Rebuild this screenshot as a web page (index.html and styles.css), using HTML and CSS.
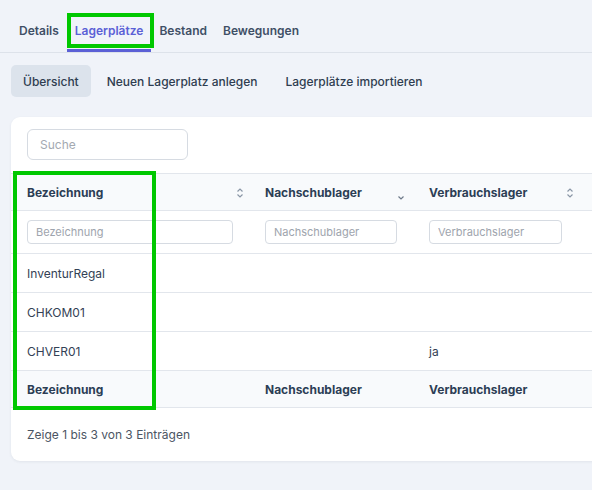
FILE: index.html
```html
<!DOCTYPE html>
<html lang="de">
<head>
<meta charset="utf-8">
<link rel="stylesheet" href="styles.css">
</head>
<body>
<div class="page">
  <nav class="tabs">
    <a class="tab">Details</a>
    <a class="tab active">Lagerplätze</a>
    <a class="tab">Bestand</a>
    <a class="tab">Bewegungen</a>
  </nav>
  <div class="subnav">
    <a class="subbtn current">Übersicht</a>
    <a class="subbtn">Neuen Lagerplatz anlegen</a>
    <a class="subbtn">Lagerplätze importieren</a>
  </div>
  <section class="card">
    <div class="search"><input class="search-input" placeholder="Suche"></div>
    <table class="grid">
      <colgroup><col class="c1"><col class="c2"><col class="c3"><col></colgroup>
      <thead>
        <tr class="head">
          <th><span>Bezeichnung</span>
            <svg class="sort" viewBox="0 0 8 12"><path d="M1.5 4.5 4 2 6.5 4.5M1.5 7.5 4 10 6.5 7.5"/></svg></th>
          <th><span>Nachschublager</span>
            <svg class="sort down" viewBox="0 0 8 12"><path d="M1.5 7.5 4 10 6.5 7.5"/></svg></th>
          <th><span>Verbrauchslager</span>
            <svg class="sort" viewBox="0 0 8 12"><path d="M1.5 4.5 4 2 6.5 4.5M1.5 7.5 4 10 6.5 7.5"/></svg></th>
          <th></th>
        </tr>
        <tr class="filters">
          <td><input class="f f1" placeholder="Bezeichnung"></td>
          <td><input class="f f2" placeholder="Nachschublager"></td>
          <td><input class="f f3" placeholder="Verbrauchslager"></td>
          <td></td>
        </tr>
      </thead>
      <tbody>
        <tr class="row"><td>InventurRegal</td><td></td><td></td><td></td></tr>
        <tr class="row"><td>CHKOM01</td><td></td><td></td><td></td></tr>
        <tr class="row"><td>CHVER01</td><td></td><td>ja</td><td></td></tr>
      </tbody>
      <tfoot>
        <tr class="head foot"><th>Bezeichnung</th><th>Nachschublager</th><th>Verbrauchslager</th><th></th></tr>
      </tfoot>
    </table>
    <p class="info">Zeige 1 bis 3 von 3 Einträgen</p>
  </section>
  <div class="mark mark-tab"></div>
  <div class="mark mark-col"></div>
</div>
</body>
</html>
```

FILE: styles.css
```css
* { box-sizing: border-box; }
html, body { margin: 0; padding: 0; }
body {
  background: #f0f3f9;
  font-family: Inter, "Noto Sans", sans-serif;
  color: #334155;
  width: 592px;
  height: 490px;
  overflow: hidden;
}
.page { position: relative; width: 592px; height: 490px; overflow: hidden; }

.tabs {
  display: flex;
  height: 53px;
  padding: 13px 0 0 11px;
  border-bottom: 1px solid #dde2ea;
}
.tab {
  display: flex;
  align-items: center;
  height: 39px;
  padding: 0 8px 2px;
  font-size: 12px;
  font-weight: 600;
  color: #3f4f66;
  border-bottom: 3px solid transparent;
}
.tab.active { color: #5b60d6; border-bottom-color: #5b60d6; }

.subnav {
  display: flex;
  gap: 4px;
  padding: 12px 0 0 11px;
}
.subbtn {
  display: flex;
  align-items: center;
  height: 32px;
  padding: 0 12px;
  border-radius: 5px;
  font-size: 12px;
  font-weight: 500;
  color: #2f3d50;
}
.subbtn.current { background: #dce3ec; }

.card {
  margin: 20px 0 0 11px;
  width: 640px;
  background: #fff;
  border-radius: 9px;
  box-shadow: 0 1px 3px rgba(30, 41, 59, 0.07);
  padding: 12px 0 1px;
}
.search { padding: 0 0 13px 16px; }
.search-input {
  width: 161px;
  height: 31px;
  border: 1px solid #d6dbe2;
  border-radius: 6px;
  padding: 0 12px;
  font: 12px Inter, sans-serif;
  background: #fff;
}
.search-input::placeholder { color: #a3a9b1; }

.grid {
  width: 100%;
  border-collapse: collapse;
  table-layout: fixed;
  font-size: 12px;
}
.c1 { width: 238px; }
.c2 { width: 164px; }
.c3 { width: 166px; }
.grid th, .grid td { padding: 0 0 0 16px; text-align: left; }
.head th {
  position: relative;
  height: 37px;
  background: #f8fafc;
  font-weight: 700;
  color: #2c3e55;
  border-top: 1px solid #e2e6ec;
  border-bottom: 1px solid #e2e6ec;
}
.sort {
  position: absolute;
  right: 5px;
  top: 13px;
  width: 8px;
  height: 12px;
  fill: none;
  stroke: #8a96a6;
  stroke-width: 1.2;
}
.sort.down { right: 8px; top: 15px; stroke: #6e7a8a; }
.filters td { height: 43px; border-bottom: 1px solid #e2e6ec; }
.f {
  display: block;
  height: 24px;
  border: 1px solid #d6dbe2;
  border-radius: 4px;
  padding: 0 8px;
  font: 11px Inter, sans-serif;
  background: #fff;
}
.f::placeholder { color: #9ea4ad; }
.f1 { width: 206px; }
.f2 { width: 132px; }
.f3 { width: 133px; }
.row td {
  height: 39px;
  border-bottom: 1px solid #e2e6ec;
  color: #334155;
}
.foot th { border-top: none; }
.info {
  margin: 0;
  padding: 19px 16px 18px;
  font-size: 12px;
  color: #4b5563;
}

.mark {
  position: absolute;
  border: 4px solid #00c800;
}
.mark-tab { left: 67px; top: 13px; width: 87px; height: 35px; }
.mark-col { left: 13px; top: 171px; width: 143px; height: 239px; }
```
